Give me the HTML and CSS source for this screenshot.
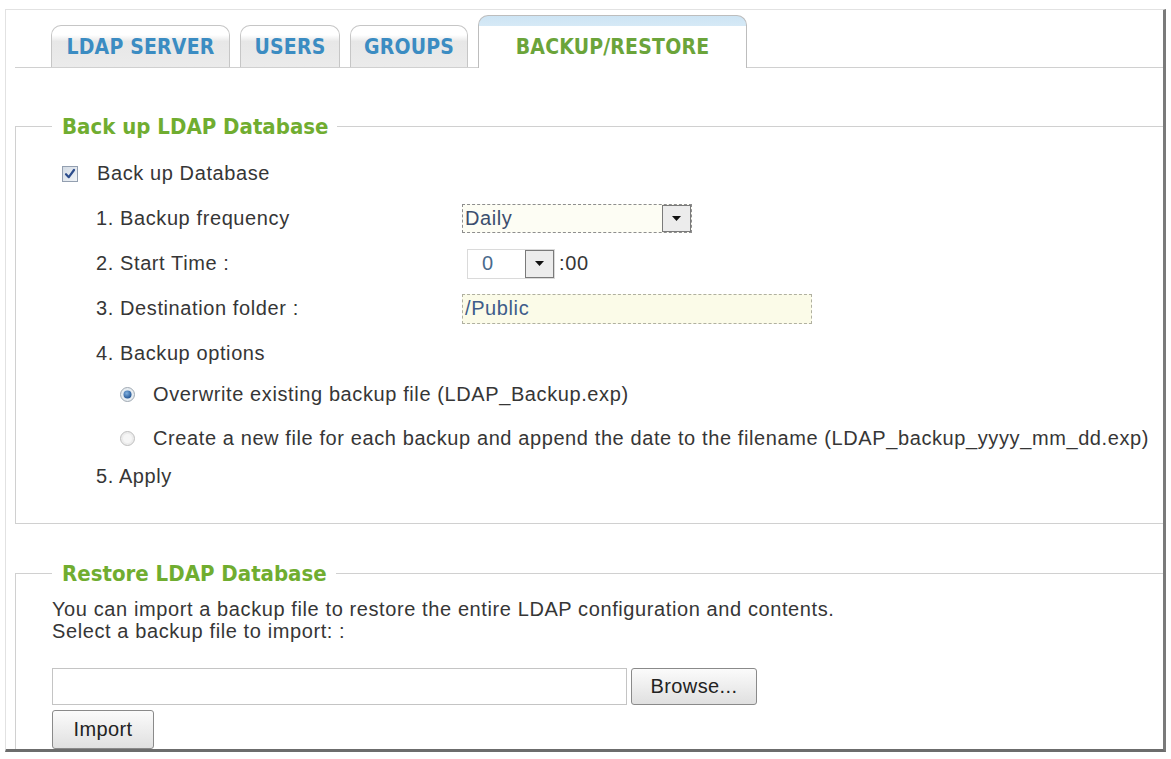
FILE: index.html
```html
<!DOCTYPE html>
<html lang="en">

<head>
    <meta charset="UTF-8">
    <meta name="viewport" content="width=device-width, initial-scale=1.0">
    <title>LDAP Backup/Restore</title>
    <link rel="stylesheet" href="styles.css">
</head>

<body>
    <div class="panel">
        <!-- tabs -->
        <div class="tabs">
            <div class="tab tab-ldap">LDAP SERVER</div>
            <div class="tab tab-users">USERS</div>
            <div class="tab tab-groups">GROUPS</div>
            <div class="tab tab-active">BACKUP/RESTORE</div>
        </div>

        <!-- back up -->
        <fieldset class="box box-backup">
            <legend>Back up LDAP Database</legend>
            <div class="row row-check">
                <svg class="check" width="16" height="16" viewBox="0 0 16 16">
                    <defs>
                        <linearGradient id="cb" x1="0" y1="0" x2="1" y2="1">
                            <stop offset="0" stop-color="#d2dae4"/>
                            <stop offset="1" stop-color="#f2f5f8"/>
                        </linearGradient>
                    </defs>
                    <rect x="0.5" y="0.5" width="15" height="15" fill="url(#cb)" stroke="#939fb0"/>
                    <path d="M4 8.2 L6.8 11.2 L12 4" fill="none" stroke="#2c4c8c" stroke-width="2.2" stroke-linecap="round" stroke-linejoin="round"/>
                </svg>
                <span>Back up Database</span>
            </div>
            <div class="row row-item">
                <span class="label">1. Backup frequency</span>
                <div class="select select-freq">
                    <span class="value">Daily</span>
                    <span class="drop"><svg width="9" height="5" viewBox="0 0 9 5"><path d="M0 0 H9 L4.5 5 Z" fill="#111"/></svg></span>
                </div>
            </div>
            <div class="row row-item">
                <span class="label">2. Start Time :</span>
                <div class="select select-time">
                    <span class="value">0</span>
                    <span class="drop"><svg width="9" height="5" viewBox="0 0 9 5"><path d="M0 0 H9 L4.5 5 Z" fill="#111"/></svg></span>
                </div>
                <span class="suffix">:00</span>
            </div>
            <div class="row row-item">
                <span class="label">3. Destination folder :</span>
                <div class="field">/Public</div>
            </div>
            <div class="row row-item">
                <span class="label">4. Backup options</span>
            </div>
            <div class="options">
                <div class="row row-opt">
                    <svg class="radio" width="15" height="15" viewBox="0 0 15 15">
                        <defs>
                            <radialGradient id="rd" cx="0.4" cy="0.35" r="0.7">
                                <stop offset="0" stop-color="#7fb0e0"/>
                                <stop offset="1" stop-color="#1d4f8f"/>
                            </radialGradient>
                        </defs>
                        <circle cx="7.5" cy="7.5" r="7" fill="#e6ecf1" stroke="#a0a9b2"/>
                        <circle cx="7.5" cy="7.5" r="4" fill="url(#rd)"/>
                    </svg>
                    <span>Overwrite existing backup file (LDAP_Backup.exp)</span>
                </div>
                <div class="row row-opt">
                    <svg class="radio" width="15" height="15" viewBox="0 0 15 15">
                        <circle cx="7.5" cy="7.5" r="7" fill="#ececec" stroke="#bfbfbf"/>
                        <circle cx="7.5" cy="7.5" r="4.5" fill="#f6f6f6"/>
                    </svg>
                    <span>Create a new file for each backup and append the date to the filename (LDAP_backup_yyyy_mm_dd.exp)</span>
                </div>
            </div>
            <div class="row row-item row-apply">
                <span class="label">5. Apply</span>
            </div>
        </fieldset>

        <!-- restore -->
        <fieldset class="box box-restore">
            <legend>Restore LDAP Database</legend>
            <p class="note">You can import a backup file to restore the entire LDAP configuration and contents.</p>
            <p class="note">Select a backup file to import: :</p>
            <div class="file-row">
                <div class="file"></div>
                <button class="btn btn-browse">Browse...</button>
            </div>
            <button class="btn btn-import">Import</button>
        </fieldset>
    </div>
</body>

</html>
```

FILE: styles.css
```css
/* 全局 */

* {
    margin: 0;
    padding: 0;
    box-sizing: border-box;
}

body {
    background-color: #fff;
    font-family: "Liberation Sans", Arial, sans-serif;
    font-size: 20px;
    letter-spacing: 0.6px;
    color: #363636;
}

.panel {
    margin: 9px 5px 0;
    height: 743px;
    border: 1px solid #e2e2e2;
    border-right: 3px solid #7a7a7a;
    border-bottom: 3px solid #6c6c6c;
    padding-left: 9px;
    overflow: hidden;
}

/* 标签页 */

.tabs {
    display: flex;
    flex-direction: row;
    align-items: flex-end;
    gap: 10px;
    height: 58px;
    padding-left: 36px;
    border-bottom: 1px solid #d0d0d0;
}

.tab {
    height: 42px;
    border: 1px solid #c6c6c6;
    border-bottom: 0;
    border-radius: 10px 10px 0 0;
    background: linear-gradient(#fff 0, #fff 22%, #e7e7e7 38%, #ebebeb 100%);
    display: flex;
    align-items: center;
    justify-content: center;
    font-family: "DejaVu Sans Condensed", "DejaVu Sans", sans-serif;
    font-weight: bold;
    font-size: 21px;
    letter-spacing: 0.2px;
    color: #3b8cc2;
}

.tab-ldap {
    width: 179px;
}

.tab-users {
    width: 100px;
}

.tab-groups {
    width: 118px;
}

.tab-active {
    width: 269px;
    height: 53px;
    margin-bottom: -1px;
    padding-top: 10px;
    background: linear-gradient(#cde4f4 0, #d6e9f6 10px, #fff 10px);
    border-color: #bdbdbd;
    color: #6ba43a;
}

/* 分组框 */

.box {
    border: 1px solid #d0d0d0;
    border-right: 0;
    padding: 12px 0 25px 36px;
    min-width: 0;
}

.box legend {
    padding: 0 9px 0 10px;
    font-family: "DejaVu Sans Condensed", "DejaVu Sans", sans-serif;
    font-weight: bold;
    font-size: 22px;
    letter-spacing: 0;
    line-height: 25px;
    color: #70ad30;
}

.box-backup {
    margin-top: 46px;
}

.box-restore {
    margin-top: 37px;
    padding-top: 12px;
}

.row {
    display: flex;
    flex-direction: row;
    align-items: center;
    height: 45px;
}

.row-check {
    padding-left: 10px;
    gap: 19px;
}

.row-item {
    padding-left: 44px;
}

.label {
    width: 366px;
    flex-shrink: 0;
}

.options {
    margin-top: -4px;
}

.row-opt {
    height: 44px;
    padding-left: 68px;
    gap: 18px;
}

.row-apply {
    height: 44px;
    margin-top: -6px;
}

/* 下拉框和输入框 */

.select {
    display: flex;
    flex-direction: row;
    align-items: stretch;
}

.select .value {
    flex: 1;
    display: flex;
    align-items: center;
}

.select-freq {
    width: 230px;
    height: 29px;
    border: 1px dashed #8e8e8e;
    background-color: #fdfdf4;
    color: #3b4e6e;
}

.select-freq .value {
    padding-left: 2px;
}

.select-time {
    width: 88px;
    height: 30px;
    margin-left: 5px;
    border: 1px solid #dadada;
    background-color: #fff;
    color: #4a6a8c;
}

.select-time .value {
    padding-left: 14px;
}

.drop {
    width: 29px;
    border: 1px solid #7a7a7a;
    background-color: #ececec;
    display: flex;
    align-items: center;
    justify-content: center;
}

.suffix {
    margin-left: 4px;
}

.field {
    width: 350px;
    height: 30px;
    border: 1px dashed #b0b0a0;
    background-color: #fbfbe8;
    color: #3e5d8a;
    padding-left: 2px;
    display: flex;
    align-items: center;
}

/* 恢复 */

.note {
    line-height: 22px;
}

.file-row {
    display: flex;
    flex-direction: row;
    gap: 4px;
    margin-top: 26px;
}

.file {
    width: 575px;
    height: 37px;
    border: 1px solid #c4c4c4;
    background-color: #fff;
}

.btn {
    font-family: "Liberation Sans", Arial, sans-serif;
    font-size: 20px;
    letter-spacing: 0.4px;
    color: #222;
    border: 1px solid #8a8a8a;
    border-radius: 3px;
    background: linear-gradient(#fbfbfb, #e0e0e0);
}

.btn-browse {
    width: 126px;
    height: 37px;
}

.btn-import {
    display: block;
    width: 102px;
    height: 39px;
    margin-top: 5px;
}
```
